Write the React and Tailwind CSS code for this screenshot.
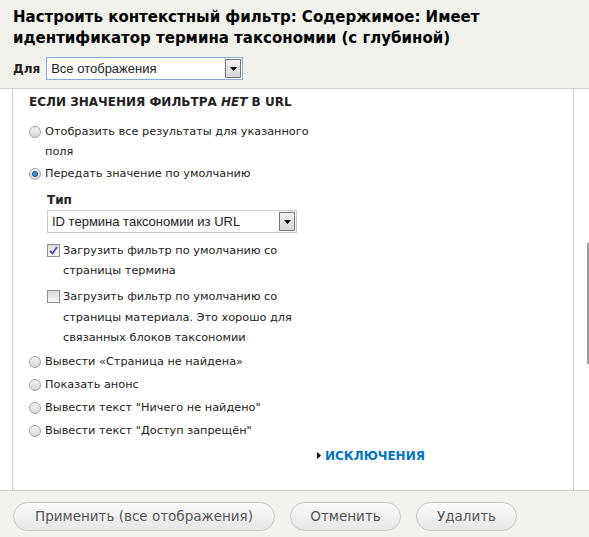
import React from 'react';

const Radio = ({ checked }) => (
  <span className="mt-[4px] mr-[4px] flex h-[12px] w-[12px] shrink-0 items-center justify-center rounded-full border border-[#a3a3a3] bg-gradient-to-b from-[#f4f4f4] to-[#d8d8d8]">
    {checked && (
      <span className="h-[6px] w-[6px] rounded-full border border-[#1d4f7c] bg-[#3b8fd4]" />
    )}
  </span>
);

const Checkbox = ({ checked }) => (
  <span className="mt-[3px] mr-[3px] flex h-[13px] w-[13px] shrink-0 items-center justify-center border border-[#8e8f8f] bg-gradient-to-b from-[#dcdcdc] to-[#f8f8f8]">
    {checked && (
      <svg width="9" height="9" viewBox="0 0 9 9">
        <path d="M1 5 L3.5 7.5 L8 1" fill="none" stroke="#4a5a9c" strokeWidth="1.8" />
      </svg>
    )}
  </span>
);

const Select = ({ value, className, textClass }) => (
  <div className={`flex items-center justify-between bg-white ${className}`}>
    <span className={`pl-[4px] font-['Liberation_Sans',sans-serif] text-[#222] ${textClass}`}>{value}</span>
    <span className="mr-[1px] flex h-[19px] w-[16px] items-center justify-center border border-[#777] bg-gradient-to-b from-[#f2f2f2] to-[#d6d6d6]">
      <svg width="7" height="4" viewBox="0 0 7 4">
        <path d="M0 0 H7 L3.5 4 Z" fill="#000" />
      </svg>
    </span>
  </div>
);

const RadioRow = ({ checked, children, className = '' }) => (
  <div className={`flex leading-[20px] ${className}`}>
    <Radio checked={checked} />
    <span>{children}</span>
  </div>
);

const Button = ({ children, className = '' }) => (
  <button className={`h-[29px] rounded-full border border-[#c8c8c8] bg-gradient-to-b from-[#fafafa] to-[#e6e6e6] text-[13.5px] text-[#555] ${className}`}>
    {children}
  </button>
);

export default function App() {
  return (
    <div className="flex h-[537px] w-[589px] flex-col overflow-hidden bg-[#f2f2ec] font-['DejaVu_Sans',sans-serif] text-[#222]">
      {/* Header */}
      <div className="border-b border-[#cfcfcf] px-[13px] pt-[7px] pb-[8px]">
        <h1 className="text-[15px] font-bold leading-[21px] text-black">
          Настроить контекстный фильтр: Содержимое: Имеет идентификатор термина таксономии (с глубиной)
        </h1>
        <div className="mt-[8px] flex items-center gap-[6px]">
          <span className="text-[12px] font-bold">Для</span>
          <Select
            value="Все отображения"
            className="h-[23px] w-[197px] border border-[#84acd8]"
            textClass="text-[13px]"
          />
        </div>
      </div>

      {/* Body */}
      <div className="flex h-[401px] bg-white">
        <div className="w-[13px] shrink-0 border-r border-[#cfcfcf]" />
        <div className="flex-1 border-r border-[#cfcfcf] pl-[16px] pt-[5px] text-[11.3px]">
          <div className="text-[12px] font-bold leading-[16px]">
            ЕСЛИ ЗНАЧЕНИЯ ФИЛЬТРА <em>НЕТ</em> В URL
          </div>
          <div className="mt-[12px] w-[290px]">
            <RadioRow>Отобразить все результаты для указанного поля</RadioRow>
            <RadioRow checked className="mt-[2px]">Передать значение по умолчанию</RadioRow>

            <div className="mt-[6px] pl-[18px]">
              <div className="text-[12px] font-bold leading-[20px]">Тип</div>
              <Select
                value="ID термина таксономии из URL"
                className="h-[23px] w-[250px] border border-[#cccccc]"
                textClass="text-[13px]"
              />
              <div className="mt-[8px] flex leading-[20px]">
                <Checkbox checked />
                <span>Загрузить фильтр по умолчанию со страницы термина</span>
              </div>
              <div className="mt-[6px] flex leading-[20.5px]">
                <Checkbox />
                <span>Загрузить фильтр по умолчанию со страницы материала. Это хорошо для связанных блоков таксономии</span>
              </div>
            </div>

            <RadioRow className="mt-[3px]">Вывести «Страница не найдена»</RadioRow>
            <RadioRow className="mt-[3px]">Показать анонс</RadioRow>
            <RadioRow className="mt-[3px]">Вывести текст "Ничего не найдено"</RadioRow>
            <RadioRow className="mt-[3px]">Вывести текст "Доступ запрещён"</RadioRow>
          </div>
          <div className="mt-[5px] flex items-center pl-[288px] leading-[20px]">
            <svg width="4" height="7" viewBox="0 0 4 7" className="mr-[4px]">
              <path d="M0 0 L4 3.5 L0 7 Z" fill="#000" />
            </svg>
            <a className="text-[12px] font-bold text-[#0074bd]">ИСКЛЮЧЕНИЯ</a>
          </div>
        </div>
        <div className="relative w-[15px] shrink-0">
          <div className="absolute right-0 top-[154px] h-[121px] w-[2px] bg-[#9a9a9a]" />
        </div>
      </div>

      {/* Footer */}
      <div className="flex flex-1 items-start gap-[15px] border-t border-[#cfcfcf] px-[13px] pt-[11px]">
        <Button className="w-[262px]">Применить (все отображения)</Button>
        <Button className="w-[111px]">Отменить</Button>
        <Button className="w-[101px]">Удалить</Button>
      </div>
    </div>
  );
}
